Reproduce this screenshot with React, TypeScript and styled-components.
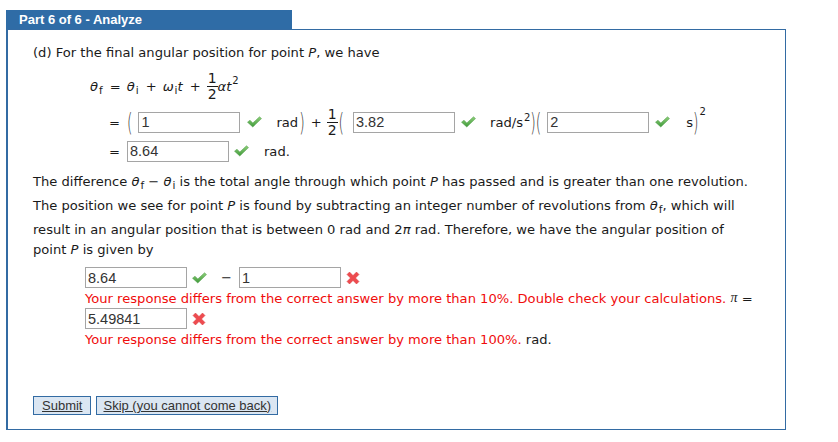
import React from "react";
import styled, { createGlobalStyle } from "styled-components";

const GlobalStyle = createGlobalStyle`
  body {
    margin: 0;
    background: #ffffff;
    color: #1a1a1a;
    font-family: "DejaVu Sans", Verdana, sans-serif;
    font-size: 13.1px;
  }
`;

const Page = styled.main`
  width: 780px;
  padding: 10px 0 0 6px;
`;

const Tab = styled.div`
  width: 273px;
  height: 19px;
  padding-left: 13px;
  background: #2f6ca6;
  color: #ffffff;
  font-family: "Liberation Sans", Arial, sans-serif;
  font-weight: bold;
  font-size: 13px;
  line-height: 19px;
`;

const Panel = styled.section`
  height: 401px;
  border: 1px solid #336ba3;
  border-left-width: 2px;
  box-sizing: border-box;
  padding: 13px 0 0 25px;
  display: flex;
  flex-direction: column;
`;

const Line = styled.div<{ $h: number; $indent?: number; $top?: number }>`
  height: ${(p) => p.$h}px;
  display: flex;
  align-items: center;
  white-space: nowrap;
  padding-left: ${(p) => p.$indent || 0}px;
  margin-top: ${(p) => p.$top || 0}px;
`;

const I = styled.i`
  font-style: italic;
`;

const Sub = styled.span`
  font-size: 10.5px;
  position: relative;
  top: 4px;
  margin-left: 1px;
`;

const Sup = styled.span<{ $rise?: number }>`
  font-size: 10px;
  position: relative;
  top: ${(p) => -(p.$rise || 6)}px;
  margin-left: 1px;
`;

const Op = styled.span<{ $l?: number; $r?: number }>`
  margin-left: ${(p) => p.$l ?? 7}px;
  margin-right: ${(p) => p.$r ?? 6}px;
`;

const Frac = styled.span`
  display: inline-flex;
  flex-direction: column;
  align-items: center;
  flex-shrink: 0;
  font-size: 14px;
  line-height: 13px;
  & > span:first-child {
    border-bottom: 1px solid #1a1a1a;
    padding: 0 1px 1px;
  }
  & > span:last-child {
    padding-top: 1px;
  }
`;

const Paren = styled.span<{ $l?: number; $r?: number }>`
  display: inline-block;
  font-size: 14px;
  transform: scaleY(1.8);
  font-weight: 300;
  margin-left: ${(p) => p.$l ?? 0}px;
  margin-right: ${(p) => p.$r ?? 0}px;
  color: #333;
`;

const Field = styled.input<{ $l?: number }>`
  width: 102px;
  height: 21px;
  box-sizing: border-box;
  flex-shrink: 0;
  margin-left: ${(p) => p.$l ?? 0}px;
  border: 1px solid #a5a5a5;
  padding: 0 2px;
  font-family: "Liberation Sans", Arial, sans-serif;
  font-size: 14.5px;
  color: #333;
  background: #fff;
  outline: none;
`;

const Mark = styled.span<{ $l?: number }>`
  display: inline-flex;
  margin-left: ${(p) => p.$l ?? 6}px;
`;

const Unit = styled.span<{ $l?: number }>`
  margin-left: ${(p) => p.$l ?? 15}px;
`;

const Para = styled.div`
  display: flex;
  flex-direction: column;
`;

const Error = styled.span`
  color: #f00c0c;
`;

const PiSymbol = styled.i`
  font-family: "Liberation Serif", serif;
  font-size: 14px;
`;

const Buttons = styled.div`
  margin-top: 47px;
  display: flex;
  gap: 5px;
`;

const Btn = styled.button<{ $pad: number }>`
  height: 19px;
  padding: 0 ${(p) => p.$pad}px;
  border: 1px solid #336ba3;
  background: #dbe6f2;
  color: #333;
  font-family: "Liberation Sans", Arial, sans-serif;
  font-size: 13px;
  text-decoration: underline;
  line-height: 16px;
`;

const Check = () => (
  <svg width="15" height="12" viewBox="0 0 15 12">
    <defs>
      <linearGradient id="cg" x1="0" y1="0" x2="0" y2="1">
        <stop offset="0" stopColor="#8fcf7a" />
        <stop offset="1" stopColor="#3f9a3a" />
      </linearGradient>
    </defs>
    <path d="M0.5 6.2 L3 4.2 L5.8 7 L12.5 0.8 L14.5 2.6 L5.8 11 Z" fill="url(#cg)" stroke="#4b9a45" strokeWidth="0.5" />
  </svg>
);

const Cross = () => (
  <svg width="14" height="14" viewBox="0 0 14 14">
    <path
      d="M1 3.5 L3.5 1 L7 4.5 L10.5 1 L13 3.5 L9.5 7 L13 10.5 L10.5 13 L7 9.5 L3.5 13 L1 10.5 L4.5 7 Z"
      fill="#ee4b4f"
      stroke="#d83a3f"
      strokeWidth="0.5"
    />
  </svg>
);

export default function App() {
  return (
    <>
      <GlobalStyle />
      <Page>
        <Tab>Part 6 of 6 - Analyze</Tab>
        <Panel>
          <Line $h={18}>
            (d) For the final angular position for point&nbsp;<I>P</I>, we have
          </Line>
          <Line $h={50} $indent={57}>
            <I>θ</I>
            <Sub>f</Sub>
            <Op>=</Op>
            <I>θ</I>
            <Sub>i</Sub>
            <Op>+</Op>
            <I>ω</I>
            <Sub>i</Sub>
            <I>t</I>
            <Op>+</Op>
            <Frac>
              <span>1</span>
              <span>2</span>
            </Frac>
            <I>αt</I>
            <Sup>2</Sup>
          </Line>
          <Line $h={22} $indent={76}>
            <span>=</span>
            <Paren $l={7} $r={6}>(</Paren>
            <Field defaultValue="1" />
            <Mark $l={7}>
              <Check />
            </Mark>
            <Unit $l={14}>rad</Unit>
            <Paren $l={1}>)</Paren>
            <Op $l={6} $r={5}>+</Op>
            <Frac>
              <span>1</span>
              <span>2</span>
            </Frac>
            <Paren $l={1} $r={9}>(</Paren>
            <Field defaultValue="3.82" />
            <Mark $l={6}>
              <Check />
            </Mark>
            <Unit $l={14}>
              rad/s<Sup>2</Sup>
            </Unit>
            <Paren>)</Paren>
            <Paren $r={6}>(</Paren>
            <Field defaultValue="2" />
            <Mark $l={6}>
              <Check />
            </Mark>
            <Unit $l={16}>s</Unit>
            <Paren>)</Paren>
            <Sup $rise={11}>2</Sup>
          </Line>
          <Line $h={36} $indent={76}>
            <span>=</span>
            <Field $l={7} defaultValue="8.64" />
            <Mark $l={5}>
              <Check />
            </Mark>
            <Unit $l={15}>rad.</Unit>
          </Line>
          <Para>
            <Line $h={24}>
              The difference&nbsp;<I>θ</I>
              <Sub>f</Sub>&nbsp;−&nbsp;<I>θ</I>
              <Sub>i</Sub>&nbsp;is the total angle through which point&nbsp;<I>P</I>&nbsp;has passed and is greater than one
              revolution.
            </Line>
            <Line $h={24}>
              The position we see for point&nbsp;<I>P</I>&nbsp;is found by subtracting an integer number of revolutions from&nbsp;
              <I>θ</I>
              <Sub>f</Sub>, which will
            </Line>
            <Line $h={24}>
              result in an angular position that is between 0 rad and 2<I>π</I>&nbsp;rad. Therefore, we have the angular position of
            </Line>
            <Line $h={16}>
              point&nbsp;<I>P</I>&nbsp;is given by
            </Line>
          </Para>
          <Line $h={21} $indent={52} $top={10}>
            <Field defaultValue="8.64" />
            <Mark $l={5}>
              <Check />
            </Mark>
            <Op $l={14} $r={7}>−</Op>
            <Field defaultValue="1" />
            <Mark $l={5}>
              <Cross />
            </Mark>
          </Line>
          <Line $h={20} $indent={52}>
            <Error>Your response differs from the correct answer by more than 10%. Double check your calculations.</Error>
            &nbsp;<PiSymbol>π</PiSymbol>&nbsp;=
          </Line>
          <Line $h={21} $indent={52}>
            <Field defaultValue="5.49841" />
            <Mark $l={5}>
              <Cross />
            </Mark>
          </Line>
          <Line $h={20} $indent={52}>
            <Error>Your response differs from the correct answer by more than 100%.</Error>&nbsp;rad.
          </Line>
          <Buttons>
            <Btn type="button" $pad={8}>
              Submit
            </Btn>
            <Btn type="button" $pad={6}>
              Skip (you cannot come back)
            </Btn>
          </Buttons>
        </Panel>
      </Page>
    </>
  );
}
